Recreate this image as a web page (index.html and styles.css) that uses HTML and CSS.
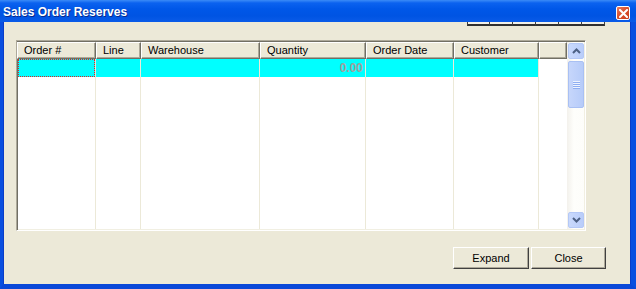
FILE: index.html
```html
<!DOCTYPE html>
<html>
<head>
<meta charset="utf-8">
<link rel="stylesheet" href="styles.css">
</head>
<body>
<div class="window">
  <div class="titlebar">
    <span class="title">Sales Order Reserves</span>
    <span class="close-box">
      <svg width="9" height="9" viewBox="0 0 9 9"><path d="M1 1 L8 8 M8 1 L1 8" stroke="#fff" stroke-width="2" stroke-linecap="square"/></svg>
    </span>
  </div>
  <div class="frame">
    <div class="toolstrip">
      <span class="tool"></span><span class="tool"></span><span class="tool"></span><span class="tool"></span><span class="tool"></span><span class="tool"></span>
    </div>
    <div class="grid">
      <div class="grid-main">
        <div class="hdr">
          <div class="hcell w-order">Order #</div>
          <div class="hcell w-line">Line</div>
          <div class="hcell w-wh">Warehouse</div>
          <div class="hcell w-qty">Quantity</div>
          <div class="hcell w-date">Order Date</div>
          <div class="hcell w-cust">Customer</div>
          <div class="hcell w-fill"></div>
        </div>
        <div class="body-cols">
          <div class="col w-order"><div class="cell sel focus"></div></div>
          <div class="col w-line"><div class="cell sel"></div></div>
          <div class="col w-wh"><div class="cell sel"></div></div>
          <div class="col w-qty"><div class="cell sel num">0.00</div></div>
          <div class="col w-date"><div class="cell sel"></div></div>
          <div class="col w-cust"><div class="cell sel"></div></div>
          <div class="col w-fill last"></div>
        </div>
      </div>
      <div class="vscroll">
        <div class="sbtn">
          <svg width="9" height="6" viewBox="0 0 9 6"><path d="M1 5 L4.5 1.5 L8 5" fill="none" stroke="#4d6185" stroke-width="2"/></svg>
        </div>
        <div class="track">
          <div class="thumb">
            <div class="grip"><i></i><i></i><i></i><i></i></div>
          </div>
        </div>
        <div class="sbtn">
          <svg width="9" height="6" viewBox="0 0 9 6"><path d="M1 1 L4.5 4.5 L8 1" fill="none" stroke="#4d6185" stroke-width="2"/></svg>
        </div>
      </div>
    </div>
    <div class="actions">
      <button class="btn btn-expand">Expand</button>
      <button class="btn btn-close">Close</button>
    </div>
  </div>
</div>
</body>
</html>
```

FILE: styles.css
```css
* { box-sizing: border-box; }
html, body {
  margin: 0;
  padding: 0;
  width: 636px;
  height: 289px;
  overflow: hidden;
  background: #ece9d8;
  font-family: "Liberation Sans", Arial, sans-serif;
  font-size: 11px;
  color: #000;
}
.window {
  width: 636px;
  height: 289px;
  display: flex;
  flex-direction: column;
}
.titlebar {
  height: 22px;
  flex: none;
  display: flex;
  align-items: center;
  justify-content: space-between;
  padding: 0 6px 0 3px;
  background: linear-gradient(to bottom, #3b8bf7 0px, #0b62ef 3px, #0057e8 9px, #0054e3 16px, #0a5be8 22px);
}
.title {
  color: #fff;
  font-weight: bold;
  font-size: 12px;
  text-shadow: 1px 1px 0 #0a2a8c;
  padding-top: 1px;
}
.close-box {
  width: 14px;
  height: 14px;
  margin-top: 4px;
  border: 1px solid #fff;
  border-radius: 2px;
  background: linear-gradient(135deg, #e87a5c 0%, #d94f2c 50%, #c83b1c 100%);
  display: flex;
  align-items: center;
  justify-content: center;
}
.frame {
  flex: 1;
  display: flex;
  flex-direction: column;
  background: #ece9d8;
  border-left: 3px solid #0a4fe0;
  border-right: 5px solid #0a4fe0;
  border-bottom: 5px solid #0a48d8;
  box-shadow: inset 1px 0 0 #0a3dc8, inset -1px 0 0 #0a3dc8;
}
.toolstrip {
  display: flex;
  justify-content: flex-end;
  margin-right: 26px;
  height: 4px;
}
.tool {
  width: 23px;
  height: 4px;
  background: #f2f0e8;
  border-right: 1px solid #404040;
  border-bottom: 2px solid #303030;
}
.tool:first-child { border-left: 1px solid #404040; }
.grid {
  margin: 14px 0 0 13px;
  width: 570px;
  height: 191px;
  display: flex;
  border: 1px solid;
  border-color: #aca899 #ffffff #ffffff #aca899;
  box-shadow: inset 1px 1px 0 #716f64, inset -1px -1px 0 #f1efe2;
  padding: 1px 1px 1px 0;
  background: #fff;
}
.grid-main {
  width: 550px;
  display: flex;
  flex-direction: column;
  background: #fff;
}
.hdr {
  display: flex;
  height: 17px;
  flex: none;
}
.hcell {
  height: 17px;
  background: #ece9d8;
  border-top: 1px solid #fff;
  border-left: 1px solid #fff;
  border-right: 1px solid #716f64;
  border-bottom: 1px solid #716f64;
  box-shadow: inset -1px -1px 0 #aca899;
  padding-left: 6px;
  line-height: 14px;
  white-space: nowrap;
  overflow: hidden;
}
.w-order { width: 79px; }
.w-line { width: 45px; }
.w-wh { width: 119px; }
.w-qty { width: 106px; }
.w-date { width: 88px; }
.w-cust { width: 85px; }
.w-fill { width: 28px; }
.body-cols {
  flex: 1;
  display: flex;
}
.col {
  height: 100%;
  border-right: 1px solid #ece9d8;
}
.col.w-order { border-left: 1px solid #716f64; }
.col.last { border-right: none; }
.cell {
  height: 18px;
}
.cell.sel { background: #00ffff; }
.cell.focus {
  border: 1px dotted #e02020;
}
.cell.num {
  text-align: right;
  padding-right: 2px;
  color: #a0a0a0;
  font-weight: bold;
  font-size: 12px;
  line-height: 19px;
}
.vscroll {
  width: 17px;
  display: flex;
  flex-direction: column;
  background: linear-gradient(to right, #f3f1ec, #fefefb 40%, #fdfdfa);
  padding: 1px 0 1px 1px;
}
.sbtn {
  height: 16px;
  flex: none;
  border: 1px solid #b4c8f6;
  border-radius: 2px;
  background: linear-gradient(to right, #c9d9fc, #b9cdfa);
  display: flex;
  align-items: center;
  justify-content: center;
}
.track {
  flex: 1;
  padding: 2px 0;
}
.thumb {
  height: 47px;
  border: 1px solid #a9c0f3;
  border-radius: 2px;
  background: linear-gradient(to right, #c6d6fb, #b6cbf9);
  display: flex;
  align-items: center;
  justify-content: center;
}
.grip {
  display: flex;
  flex-direction: column;
  gap: 1px;
}
.grip i {
  display: block;
  width: 7px;
  height: 1px;
  background: #eef3fe;
  box-shadow: 0 1px 0 #8eaef2;
}
.actions {
  display: flex;
  justify-content: flex-end;
  gap: 2px;
  margin: 16px 25px 0 0;
}
.btn {
  height: 22px;
  font-family: "Liberation Sans", Arial, sans-serif;
  font-size: 11px;
  color: #000;
  background: #ece9d8;
  border: 1px solid;
  border-color: #ffffff #404040 #404040 #ffffff;
  box-shadow: inset -1px -1px 0 #aca899;
  padding: 0;
  margin: 0;
}
.btn-expand { width: 76px; }
.btn-close { width: 75px; }
```
